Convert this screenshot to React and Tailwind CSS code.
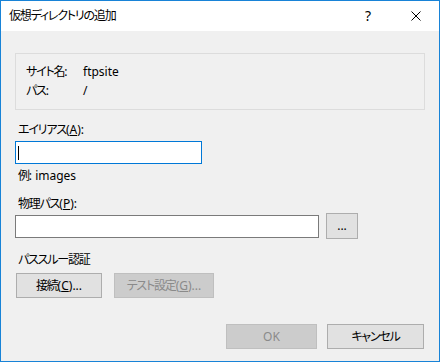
import React from 'react';

const font = {
  fontFamily: '"Noto Sans", "Noto Sans CJK JP", sans-serif',
};

// 日本語部分だけ字間を詰める
function J({ children }) {
  return <span className="tracking-[-1.2px]">{children}</span>;
}

function Btn({ children, disabled, className = '' }) {
  return (
    <div
      className={
        'flex items-center justify-center h-[25px] text-[12px] leading-[16px] border ' +
        (disabled
          ? 'bg-[#cccccc] border-[#bfbfbf] text-[#8a8a8a] '
          : 'bg-[#e1e1e1] border-[#adadad] text-black ') +
        className
      }
    >
      {children}
    </div>
  );
}

export default function App() {
  return (
    <div
      className="w-[440px] h-[362px] border border-[#1883d7] bg-[#f0f0f0] flex flex-col text-black [font-feature-settings:'palt']"
      style={font}
    >
      {/* title bar */}
      <div className="h-[30px] bg-white flex items-center pl-[8px] text-[12px] leading-[16px]">
        <div className="flex-1">
          <J>仮想ディレクトリの追加</J>
        </div>
        <div className="w-[10px] text-[14px] text-center mr-[38px]">?</div>
        <svg width="10" height="10" viewBox="0 0 10 10" className="mr-[18px]">
          <path d="M0.5 0.5 L9.5 9.5 M9.5 0.5 L0.5 9.5" stroke="#000" strokeWidth="1" />
        </svg>
      </div>

      <div className="flex flex-col px-[14px] text-[12px] leading-[16px]">
        {/* info box */}
        <div className="mt-[22px] w-[410px] h-[57px] border border-[#dcdcdc] pl-[10px] pt-[8px]">
          <div className="flex h-[19px] items-center">
            <div className="w-[57px]">
              <J>サイト名</J>:
            </div>
            <div>ftpsite</div>
          </div>
          <div className="flex h-[19px] items-center">
            <div className="w-[57px]">
              <J>パス</J>:
            </div>
            <div>/</div>
          </div>
        </div>

        <div className="mt-[12px] pl-[3px]">
          <J>エイリアス</J>(<u>A</u>):
        </div>
        <div className="mt-[3px] w-[187px] h-[23px] bg-white border border-[#0078d7] flex items-center pl-[2px]">
          <div className="w-[1px] h-[14px] bg-black" />
        </div>
        <div className="mt-[4px] pl-[3px]">
          <J>例</J>: images
        </div>

        <div className="mt-[12px] pl-[3px]">
          <J>物理パス</J>(<u>P</u>):
        </div>
        <div className="mt-[1px] flex items-center">
          <div className="w-[304px] h-[23px] bg-white border border-[#7a7a7a]" />
          <Btn className="ml-[7px] w-[32px] h-[26px] text-[11px]">...</Btn>
        </div>

        <div className="mt-[13px] pl-[3px]">
          <J>パススルー認証</J>
        </div>
        <div className="mt-[5px] flex gap-[12px] pl-[1px]">
          <Btn className="w-[86px]">
            <J>接続</J>(<u>C</u>)...
          </Btn>
          <Btn disabled className="w-[100px]">
            <J>テスト設定</J>(<u>G</u>)...
          </Btn>
        </div>

        <div className="mt-[26px] flex justify-end gap-[10px] pr-[1px]">
          <Btn disabled className="w-[91px]">OK</Btn>
          <Btn className="w-[97px]">
            <J>キャンセル</J>
          </Btn>
        </div>
      </div>
    </div>
  );
}
